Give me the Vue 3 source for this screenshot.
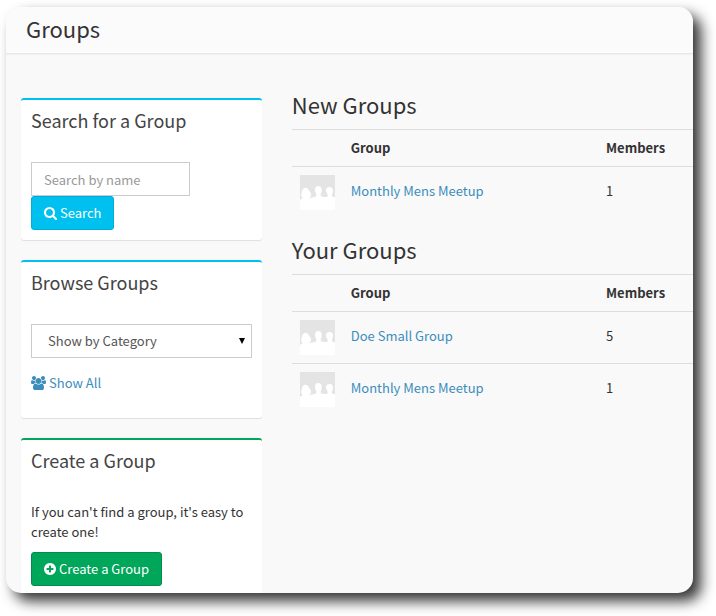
<script setup>
import { ref } from 'vue'

const query = ref('')
const category = ref('')
const sections = [
  { title: 'New Groups', groups: [{ name: 'Monthly Mens Meetup', members: 1 }] },
  {
    title: 'Your Groups',
    groups: [
      { name: 'Doe Small Group', members: 5 },
      { name: 'Monthly Mens Meetup', members: 1 },
    ],
  },
]
</script>

<template>
  <div class="page">
    <header class="page-header">
      <h1>Groups</h1>
    </header>
    <div class="content">
      <aside class="sidebar">
        <section class="box info">
          <h2>Search for a Group</h2>
          <form class="box-body" @submit.prevent>
            <input v-model="query" class="control search-input" type="text" placeholder="Search by name" aria-label="Search by name" />
            <button class="btn btn-info" type="submit">
              <svg class="icon icon-search" viewBox="0 0 1664 1664" aria-hidden="true">
                <path d="M1152 704q0-185-131.500-316.500t-316.500-131.500-316.500 131.500-131.500 316.500 131.500 316.500 316.500 131.500 316.500-131.500 131.500-316.500zM1664 1536q0 52-38 90t-90 38q-54 0-90-38l-343-342q-179 124-399 124-143 0-273.500-55.500t-225-150-150-225-55.500-273.500 55.500-273.500 150-225 225-150 273.500-55.500 273.500 55.500 225 150 150 225 55.500 273.500q0 220-124 399l343 343q37 37 37 90z" />
              </svg>
              <span>Search</span>
            </button>
          </form>
        </section>

        <section class="box info">
          <h2>Browse Groups</h2>
          <div class="box-body browse">
            <div class="select-wrap">
              <select v-model="category" class="control" aria-label="Show by Category">
                <option value="">Show by Category</option>
              </select>
            </div>
            <a class="show-all" href="#">
              <svg class="icon icon-users" viewBox="0 0 1920 1792" aria-hidden="true">
                <path d="M593 896q-162 5-265 128h-134q-82 0-138-40.500t-56-118.500q0-353 124-353 6 0 43.500 21t97.500 42.500 119 21.500q67 0 133-23-5 37-5 66 0 139 81 256zM1664 1533q0 120-73 189.500t-194 69.500h-874q-121 0-194-69.500t-73-189.500q0-53 3.500-103.500t14-109 26.500-108.500 43-97.500 62-81 85.500-53.500 111.500-20q10 0 43 21.500t73 48 107 48 135 21.500 135-21.500 107-48 73-48 43-21.500q61 0 111.500 20t85.500 53.500 62 81 43 97.500 26.500 108.500 14 109 3.500 103.500zM640 256q0 106-75 181t-181 75-181-75-75-181 75-181 181-75 181 75 75 181zM1344 640q0 159-112.500 271.500t-271.500 112.500-271.500-112.500-112.500-271.500 112.500-271.500 271.500-112.500 271.500 112.500 112.500 271.500zM1920 865q0 78-56 118.500t-138 40.500h-134q-103-123-265-128 81-117 81-256 0-29-5-66 66 23 133 23 59 0 119-21.500t97.500-42.500 43.500-21q124 0 124 353zM1792 256q0 106-75 181t-181 75-181-75-75-181 75-181 181-75 181 75 75 181z" />
              </svg>
              <span>Show All</span>
            </a>
          </div>
        </section>

        <section class="box success">
          <h2>Create a Group</h2>
          <div class="box-body">
            <p>If you can't find a group, it's easy to create one!</p>
            <button class="btn btn-success" type="button">
              <svg class="icon icon-plus" viewBox="0 0 1536 1536" aria-hidden="true">
                <path d="M1216 832v-128q0-26-19-45t-45-19h-256v-256q0-26-19-45t-45-19h-128q-26 0-45 19t-19 45v256h-256q-26 0-45 19t-19 45v128q0 26 19 45t45 19h256v256q0 26 19 45t45 19h128q26 0 45-19t19-45v-256h256q26 0 45-19t19-45zM1536 768q0 209-103 385.500t-279.500 279.500-385.500 103-385.500-103-279.500-279.500-103-385.500 103-385.500 279.500-279.500 385.500-103 385.500 103 279.500 279.500 103 385.500z" />
              </svg>
              <span>Create a Group</span>
            </button>
          </div>
        </section>
      </aside>

      <main class="lists">
        <section v-for="section in sections" :key="section.title">
          <h2>{{ section.title }}</h2>
          <table>
            <thead>
              <tr>
                <th class="col-photo"></th>
                <th>Group</th>
                <th class="col-members">Members</th>
              </tr>
            </thead>
            <tbody>
              <tr v-for="group in section.groups" :key="group.name">
                <td class="photo-cell">
                  <svg class="photo" viewBox="0 0 35 35" aria-hidden="true">
                    <rect width="35" height="35" fill="#e4e4e4" />
                    <path fill="#fff" d="M0 35V25Q1 23.500 3.500 23Q1 22.500 1.200 20.500Q1.500 13 5.500 12.800Q8 13 10 17Q12 19.500 10.500 21.500Q9.500 22.500 9 23Q13 22.500 16 21.500Q17 20 16 18.500Q14.500 16 15 14Q15.500 11 18.300 11Q21.200 11 21.700 14Q22 17 20.700 19Q20 21 22 21.500Q25 22.500 27.500 21.500Q28.500 20.500 27 18.500Q25.500 16 26 14Q27 12 29.500 12Q32.500 12 33 15Q33 18 31.700 20Q31.500 21.500 35 22.500V35Z" />
                  </svg>
                </td>
                <td><a href="#">{{ group.name }}</a></td>
                <td>{{ group.members }}</td>
              </tr>
            </tbody>
          </table>
        </section>
      </main>
    </div>
  </div>
</template>

<style>
body {
  margin: 0;
  overflow: hidden;
  background: #fff;
}
</style>

<style scoped>
*, *::before, *::after {
  box-sizing: border-box;
}

.page {
  height: calc(100vh - 30px);
  margin: 7px 23px 23px 6px;
  overflow: hidden;
  border-radius: 15px;
  background: #f9f9f9;
  box-shadow: 8px 8px 14px rgba(0, 0, 0, 0.8);
  color: #333;
  font-family: "Noto Sans CJK SC", "Noto Sans", sans-serif;
  font-size: 13px;
  line-height: 20px;
}

h1, h2, p {
  margin: 0;
  font-weight: 400;
}

a {
  color: #3c8dbc;
  text-decoration: none;
}

.page-header {
  padding: 10px 20px 14px;
  background: #fbfbfb;
  border-bottom: 1px solid #e7e7e7;
  box-shadow: 0 1px 1px rgba(0, 0, 0, 0.03);
}

.page-header h1 {
  font-size: 22px;
  line-height: 22px;
}

.content {
  display: grid;
  grid-template-columns: minmax(0, 3fr) minmax(0, 5fr);
  gap: 30px;
  padding: 39px 0 0 15px;
}

.sidebar {
  display: flex;
  flex-direction: column;
  gap: 20px;
  padding-top: 5px;
}

.box {
  border-top: 2px solid #00c0ef;
  border-radius: 3px;
  background: #fff;
  box-shadow: 0 1px 1px rgba(0, 0, 0, 0.1);
}

.box.success {
  border-top-color: #00a65a;
}

.box h2 {
  padding: 10px 10px 12px;
  color: #444;
  font-size: 18px;
  line-height: 20px;
}

.box-body {
  padding: 20px 10px 10px;
}

.browse {
  padding-bottom: 25px;
}

.control, .btn {
  display: block;
  height: 34px;
  padding: 6px 12px;
  border: 1px solid #ccc;
  font: inherit;
}

.control {
  border-radius: 0;
  background: #fff;
  color: #555;
}

.control::placeholder {
  color: #999;
  opacity: 1;
}

.search-input {
  width: 72%;
}

.btn {
  display: flex;
  align-items: center;
  gap: 3px;
  border-radius: 3px;
  color: #fff;
}

.btn-info {
  background: #00c0ef;
  border-color: #00acd6;
}

.btn-success {
  margin-top: 10px;
  background: #00a65a;
  border-color: #008d4c;
}

.icon {
  flex: none;
  fill: currentColor;
}

.icon-search {
  width: 13px;
  height: 13px;
}

.icon-plus {
  width: 12px;
  height: 12px;
}

.icon-users {
  width: 15px;
  height: 14px;
}

.select-wrap {
  position: relative;
}

.select-wrap::after {
  content: "";
  position: absolute;
  top: 14px;
  right: 7px;
  border: 3px solid transparent;
  border-top: 6px solid #000;
  border-bottom: 0;
  pointer-events: none;
}

.select-wrap select {
  width: 100%;
  padding: 6px 16px;
  appearance: none;
}

.show-all {
  display: flex;
  align-items: center;
  gap: 3px;
  margin-top: 15px;
}

.lists {
  display: flex;
  flex-direction: column;
  gap: 20px;
}

.lists h2 {
  margin-bottom: 14px;
  font-size: 22px;
  line-height: 22px;
}

table {
  width: 100%;
  border-collapse: separate;
  border-spacing: 0;
  table-layout: fixed;
}

th, td {
  padding: 8px;
  border-top: 1px solid #ddd;
  text-align: left;
  vertical-align: middle;
}

th {
  font-weight: 700;
}

td {
  padding: 6px 8px 10px;
}

.photo-cell {
  padding: 8px;
}

.col-photo {
  width: 51px;
}

.col-members {
  width: 95px;
}

.photo {
  display: block;
  width: 35px;
  height: 35px;
}
</style>
